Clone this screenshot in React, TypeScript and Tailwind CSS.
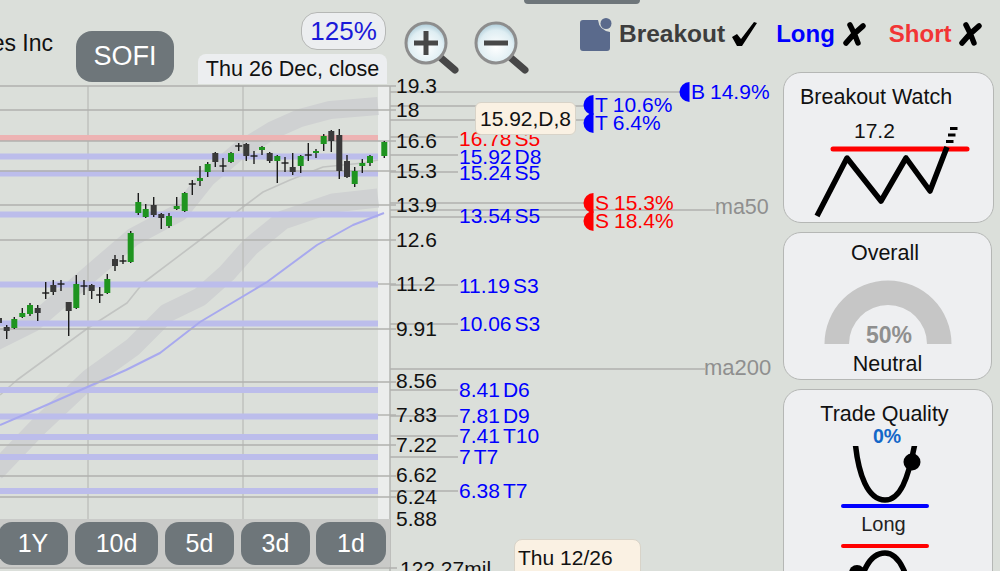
import React from 'react';

// [x, wickTop, wickBottom, bodyTop, bodyBottom, up]
const candles: [number, number, number, number, number, number][] = [
  [-1, 317, 324, 318, 323, 0], [6.7, 325, 339, 327, 331, 0], [14.3, 317, 329, 319, 328, 1],
  [22.3, 308, 318, 313, 317, 1], [30, 303, 316, 305, 314, 1], [37.7, 305, 321, 308, 313, 0],
  [45.7, 282, 299, 293, 294, 0], [53.3, 280, 295, 285, 292, 0], [61, 280, 291, 284, 285, 0],
  [68.7, 302, 336, 302, 311, 0], [76.3, 275, 309, 284, 308, 1], [84, 280, 295, 286, 287, 0],
  [91.7, 284, 299, 285, 291, 0], [99.7, 287, 303, 295, 296, 0], [107.3, 274, 294, 279, 293, 1],
  [115, 255, 271, 259, 266, 0], [123, 255, 264, 261, 262, 0], [130.7, 231, 263, 233, 262, 1],
  [138.3, 193, 215, 202, 213, 1], [145.7, 204, 218, 209, 217, 1], [153.7, 197, 217, 205, 215, 0],
  [161.3, 213, 229, 214, 218, 0], [169, 213, 228, 216, 226, 1], [176.7, 197, 210, 206, 209, 1],
  [184.7, 192, 212, 193, 211, 1], [192.3, 180, 195, 184, 185, 0], [200, 166, 186, 178, 181, 1],
  [207.7, 162, 177, 164, 172, 1], [215.3, 152, 167, 153, 162, 0], [223, 158, 172, 166, 167, 0],
  [231, 152, 163, 153, 162, 1], [238.7, 143, 151, 146, 147, 0], [246.3, 143, 161, 144, 156, 0],
  [254, 151, 164, 156, 157, 0], [262, 146, 155, 147, 150, 1], [269.7, 152, 163, 153, 161, 0],
  [277.3, 155, 183, 156, 161, 1], [285, 157, 172, 163, 164, 0], [292.7, 153, 175, 167, 172, 0],
  [300.7, 155, 173, 156, 166, 1], [308.3, 143, 161, 155, 156, 0], [316, 149, 158, 151, 153, 1],
  [323.7, 134, 151, 136, 144, 1], [331.3, 130, 152, 131, 141, 0], [339.3, 129, 179, 135, 171, 0],
  [347, 155, 178, 161, 177, 0], [354.7, 167, 187, 171, 184, 1], [362.3, 159, 173, 163, 166, 1],
  [370, 155, 166, 156, 163, 1], [384.3, 141, 158, 142, 156, 1],
];

const purpleBands = [156.5, 173.5, 214.5, 284.5, 323.5, 390, 416.5, 437, 457, 491];
const chartLines = [86, 110, 141, 171, 205, 240, 329, 382, 445, 476, 497];
const shortTicks = [284, 415];
const levelLines: [number, number][] = [
  [92, 680], [106, 585], [120, 585], [137, 458], [155, 458], [172, 458], [203, 585], [210, 715],
  [217, 585], [285, 458], [324, 458], [369, 705], [390, 458], [416, 458], [436, 458], [457, 458], [491, 458],
];
const axisLabels: [string, number][] = [
  ['19.3', 86], ['18', 110], ['16.6', 141], ['15.3', 171], ['13.9', 205], ['12.6', 240], ['11.2', 284],
  ['9.91', 329], ['8.56', 381], ['7.83', 415], ['7.22', 445], ['6.62', 475], ['6.24', 497], ['5.88', 519],
];
const levels: [string, string, number, boolean][] = [
  ['16.78', 'S5', 139, true], ['15.92', 'D8', 157, false], ['15.24', 'S5', 173, false], ['13.54', 'S5', 216, false],
  ['11.19', 'S3', 286, false], ['10.06', 'S3', 324, false], ['8.41', 'D6', 390, false], ['7.81', 'D9', 416, false],
  ['7.41', 'T10', 436, false], ['7', 'T7', 457, false], ['6.38', 'T7', 491, false],
];
const targets: [string, string, number, number, string][] = [
  ['B', '14.9%', 680, 92, 'text-[#0000ff]'], ['T', '10.6%', 584, 105, 'text-[#0000ff]'],
  ['T', '6.4%', 584, 123, 'text-[#0000ff]'], ['S', '15.3%', 584, 203, 'text-[#ff0000]'],
  ['S', '18.4%', 584, 221, 'text-[#ff0000]'],
];
const ranges: [string, string][] = [
  ['1Y', 'w-[70px]'], ['10d', 'w-[83px]'], ['5d', 'w-[69px]'], ['3d', 'w-[69px]'], ['1d', 'w-[70px] -ml-px'],
];

const ZoomIcon = ({ minus, id }: { minus?: boolean; id: string }) => (
  <svg width="58" height="54" viewBox="0 0 58 54" className="block shrink-0">
    <defs>
      <radialGradient id={id} cx="50%" cy="60%" r="60%">
        <stop offset="0%" stopColor="#ffffff" />
        <stop offset="70%" stopColor="#dfeef3" />
        <stop offset="100%" stopColor="#a9c9d6" />
      </radialGradient>
    </defs>
    <line x1="38" y1="38" x2="52" y2="50" stroke="#474747" strokeWidth="7" strokeLinecap="round" />
    <circle cx="23" cy="23" r="20" fill={`url(#${id})`} stroke="#8d8d8d" strokeWidth="3" />
    <line x1="11" y1="23" x2="35" y2="23" stroke="#474747" strokeWidth="5" />
    {!minus && <line x1="23" y1="11" x2="23" y2="35" stroke="#474747" strokeWidth="5" />}
  </svg>
);

const Cross = () => (
  <svg width="24" height="24" viewBox="0 0 24 24" className="block shrink-0">
    <path d="M7 3 Q12 12 15 21 M20 4 Q11 11 3 21" stroke="#000" strokeWidth="5.5" fill="none" strokeLinecap="round" />
  </svg>
);

const Chart = () => (
  <svg width="783" height="499" viewBox="0 72 783 499" className="absolute inset-0">
    <rect x="378" y="86" width="12" height="433" fill="#ebedec" />
    <polyline
      points="-5,342 33,323 83,280 133,237 180,212 207,178 240,150 273,130 300,118 330,110 378,106"
      fill="none" stroke="#cfd1d2" strokeWidth="18" strokeLinejoin="round"
    />
    <polyline
      points="-5,472 40,425 90,378 133,347 167,313 200,297 227,273 250,247 283,220 333,203 378,198"
      fill="none" stroke="#cfd1d2" strokeWidth="19" strokeLinejoin="round"
    />
    <polyline
      points="0,395 17,380 88,328 127,303 143,283 200,240 243,207 263,192 290,180 323,167 363,163 378,160"
      fill="none" stroke="#c2c4c2" strokeWidth="1.6" strokeLinejoin="round"
    />
    <line x1="88" y1="86" x2="88" y2="520" stroke="#b9bbb8" strokeWidth="1.2" />
    <line x1="243" y1="86" x2="243" y2="520" stroke="#b9bbb8" strokeWidth="1.2" />
    <rect x="0" y="135" width="378" height="6" fill="#edb3b3" />
    {purpleBands.map((y) => (
      <rect key={y} x="0" y={y - 3} width="378" height="6" fill="#bcbdeb" />
    ))}
    <polyline
      points="0,425 42,407 126,370 160,353 200,322 267,282 317,245 353,225 384,213"
      fill="none" stroke="#a8a9ee" strokeWidth="2" strokeLinejoin="round"
    />
    {chartLines.map((y) => (
      <line key={y} x1="0" y1={y} x2="396" y2={y} stroke="#b0b1ae" strokeWidth="1.4" />
    ))}
    {shortTicks.map((y) => (
      <line key={y} x1="378" y1={y} x2="396" y2={y} stroke="#b0b1ae" strokeWidth="1.4" />
    ))}
    {levelLines.map(([y, x2]) => (
      <line key={y} x1="390" y1={y} x2={x2} y2={y} stroke="#b0b1ae" strokeWidth="1.4" />
    ))}
    <line x1="390" y1="86" x2="390" y2="571" stroke="#b0b1ae" strokeWidth="1.4" />
    <line x1="0" y1="568" x2="397" y2="568" stroke="#b0b1ae" strokeWidth="1.4" />
    {candles.map(([x, wt, wb, bt, bb, up]) => {
      const thin = bb - bt <= 1;
      return (
        <g key={x}>
          <line x1={x} y1={wt} x2={x} y2={wb} stroke="#1c1c1c" strokeWidth="1.4" />
          {thin ? (
            <line x1={x - 3.5} y1={bt} x2={x + 3.5} y2={bt} stroke="#1c1c1c" strokeWidth="1.4" />
          ) : (
            <rect x={x - 3} y={bt} width="6" height={bb - bt} fill={up ? '#1f9420' : '#3a3a3a'} />
          )}
        </g>
      );
    })}
    {targets.map(([, , x, y, color]) => (
      <path
        key={y}
        d={`M${x + 9.5} ${y - 10} A10 10 0 0 0 ${x + 9.5} ${y + 10} Z`}
        fill={color.includes('ff0000') ? '#ff0000' : '#0000ff'}
      />
    ))}
  </svg>
);

export default function App() {
  return (
    <div className="relative flex h-[571px] w-[1000px] flex-col overflow-hidden bg-[#dbdfda] font-['Liberation_Sans',sans-serif] text-black">
      <header className="relative z-10 flex h-[72px] shrink-0 items-start">
        <div className="mt-[30px] flex h-[27px] w-[53px] justify-end overflow-hidden whitespace-nowrap text-[23px] leading-[27px] text-[#111]">
          SoFi Technologies Inc
        </div>
        <button className="ml-[23px] mt-[31px] flex h-[51px] w-[98px] items-center justify-center rounded-[16px] bg-[#6e767a] text-[27px] text-white">
          SOFI
        </button>
        <div className="ml-[24px] flex w-[189px] flex-col items-end">
          <div className="mr-px mt-[12px] flex h-[38px] w-[85px] items-center justify-center rounded-[16px] border border-[#b5b7b5] bg-[#eceef0] text-[26px] text-[#1a1ad8]">
            125%
          </div>
          <div className="mt-[4px] flex h-[30px] w-[189px] items-center justify-center rounded-t-[8px] bg-[#eceef0] text-[21.5px] text-[#111]">
            Thu 26 Dec, close
          </div>
        </div>
        <div className="ml-[16px] mt-[20px] flex w-[70px] shrink-0 gap-[12px]">
          <ZoomIcon id="zoom-in" />
          <ZoomIcon id="zoom-out" minus />
        </div>
        <div className="absolute left-[524px] top-0 h-[4px] w-[116px] rounded-b-[10px] bg-[#6e767a]" />
        <div className="absolute left-[580px] top-[16px] flex items-center">
          <svg width="32" height="33" viewBox="0 0 32 33" className="block">
            <path
              d="M3 2 H18 Q19 12 30 14 V30 Q30 33 27 33 H3 Q0 33 0 30 V5 Q0 2 3 2 Z"
              fill="#5a6a8c"
            />
            <circle cx="26" cy="5.5" r="5.5" fill="#5a6a8c" />
          </svg>
          <span className="ml-[7px] text-[24.5px] font-bold text-[#3d3d3d]">Breakout</span>
          <svg width="26" height="26" viewBox="0 0 26 26" className="ml-[6px] block">
            <path d="M1 16 L6 13 L10 18 L23 1 L26 2 L11 25 L6 25 Z" fill="#000" />
          </svg>
          <span className="ml-[19px] text-[24px] font-bold text-[#0000ff]">Long</span>
          <span className="ml-[8px]">
            <Cross />
          </span>
          <span className="ml-[22px] text-[24px] font-bold text-[#f23535]">Short</span>
          <span className="ml-[7px]">
            <Cross />
          </span>
        </div>
      </header>

      <div className="flex min-h-0 flex-1">
        <div className="relative w-[783px] shrink-0">
          <Chart />

          {axisLabels.map(([label, y]) => (
            <span
              key={label}
              className="absolute left-[396px] -translate-y-1/2 text-[21px] leading-none text-[#111]"
              style={{ top: y - 73 }}
            >
              {label}
            </span>
          ))}
          <span className="absolute left-[400px] top-[486px] text-[21px] leading-none text-[#111]">122.27mil</span>

          {levels.map(([value, tag, y, red]) => (
            <div
              key={y}
              className={`absolute left-[459px] flex -translate-y-1/2 gap-[3px] text-[21px] leading-none ${red ? 'text-[#ff0000]' : 'text-[#0000ff]'}`}
              style={{ top: y - 73 }}
            >
              <span>{value}</span>
              <span>{tag}</span>
            </div>
          ))}

          {targets.map(([letter, pct, x, y, color]) => (
            <div
              key={y}
              className={`absolute flex -translate-y-1/2 gap-[5px] text-[21px] leading-none ${color}`}
              style={{ left: x + 11, top: y - 73 }}
            >
              <span>{letter}</span>
              <span>{pct}</span>
            </div>
          ))}

          <span className="absolute left-[715px] top-[125px] text-[21.5px] leading-none text-[#8f8f8f]">ma50</span>
          <span className="absolute left-[704px] top-[285px] text-[22px] leading-none text-[#8f8f8f]">ma200</span>

          <div className="absolute left-[475px] top-[30px] flex h-[33px] w-[101px] items-center justify-center rounded-[6px] border border-[#d8d3c8] bg-[#faf1e3] text-[21px] text-[#111]">
            15.92,D,8
          </div>

          <div className="absolute left-[-20px] top-[447px] flex h-[48px] w-[410px] items-start justify-end gap-[7px] bg-[#c9cac8] pr-[4px] pt-[3px]">
            {ranges.map(([label, width]) => (
              <button
                key={label}
                className={`flex h-[43px] ${width} items-center justify-center rounded-[14px] bg-[#6e767a] text-[25px] text-white`}
              >
                {label}
              </button>
            ))}
          </div>

          <div className="absolute left-[514px] top-[467px] h-[40px] w-[127px] rounded-t-[8px] border border-[#d8d3c8] bg-[#faf1e3] pl-[3px] pt-[4px] text-[21px] leading-[28px] text-[#111]">
            Thu 12/26
          </div>
        </div>

        <aside className="flex min-w-0 flex-1 flex-col gap-[9px]">
          <section className="relative h-[151px] w-[211px] shrink-0 rounded-[18px] border border-[#b5b7b5] bg-[#eeeff1]">
            <h3 className="ml-[16px] mt-[12px] text-[21.5px] font-normal leading-[24px] text-[#111]">Breakout Watch</h3>
            <div className="ml-[70px] mt-[10px] text-[21px] leading-[24px] text-[#111]">17.2</div>
            <svg width="209" height="97" viewBox="784 125 209 97" className="absolute bottom-0 left-0">
              <line x1="833" y1="149" x2="967" y2="149" stroke="#ff0000" strokeWidth="5" strokeLinecap="round" />
              <polyline
                points="817,216 847,158 881,201 906,158 930,191 947,147"
                fill="none" stroke="#000" strokeWidth="5.5" strokeLinejoin="round"
              />
              <path d="M950 128.5 H957.5 M948 135 H955.5 M946 141.5 H953.5" stroke="#000" strokeWidth="3" fill="none" />
            </svg>
          </section>

          <section className="relative flex h-[148px] w-[209px] shrink-0 flex-col items-center rounded-[18px] border border-[#b5b7b5] bg-[#eeeff1]">
            <h3 className="mt-[8px] pr-[5px] text-[21.5px] font-normal leading-[24px] text-[#111]">Overall</h3>
            <svg width="128" height="64" viewBox="0 0 128 64" className="mt-[15px] block">
              <path d="M0.5 64 A63.5 63.5 0 0 1 127.5 64 H103 A39 39 0 0 0 25 64 Z" fill="#c6c6c6" />
            </svg>
            <div className="absolute left-[82px] top-[89px] text-[23px] font-bold leading-[26px] text-[#8f8f8f]">50%</div>
            <div className="mt-[8px] text-[21.5px] leading-[24px] text-[#111]">Neutral</div>
          </section>

          <section className="relative h-[200px] w-[210px] shrink-0 rounded-[18px] border border-[#b5b7b5] bg-[#eeeff1]">
            <h3 className="mt-[12px] pr-[7px] text-center text-[21.5px] font-normal leading-[24px] text-[#111]">Trade Quality</h3>
            <div className="pr-[2px] text-center text-[19.5px] font-bold leading-[20px] text-[#1467c8]">0%</div>
            <svg width="208" height="67" viewBox="784 446 208 67" className="block">
              <path d="M855 440 C858 475 868 500 885 500 C900 500 908 480 915 443" fill="none" stroke="#000" strokeWidth="5.5" />
              <circle cx="912" cy="462" r="8.5" fill="#000" />
              <line x1="843" y1="506" x2="927" y2="506" stroke="#0000ff" strokeWidth="4" strokeLinecap="round" />
            </svg>
            <div className="-mt-px pr-[9px] text-center text-[20px] leading-[24px] text-[#222]">Long</div>
            <svg width="208" height="36" viewBox="784 536 208 36" className="block">
              <line x1="843" y1="546" x2="927" y2="546" stroke="#ff0000" strokeWidth="4" strokeLinecap="round" />
              <path d="M855 610 C860 570 870 553 885 553 C900 553 908 575 915 610" fill="none" stroke="#000" strokeWidth="5.5" />
              <circle cx="857" cy="573" r="8" fill="#000" />
            </svg>
          </section>
        </aside>
      </div>
    </div>
  );
}
